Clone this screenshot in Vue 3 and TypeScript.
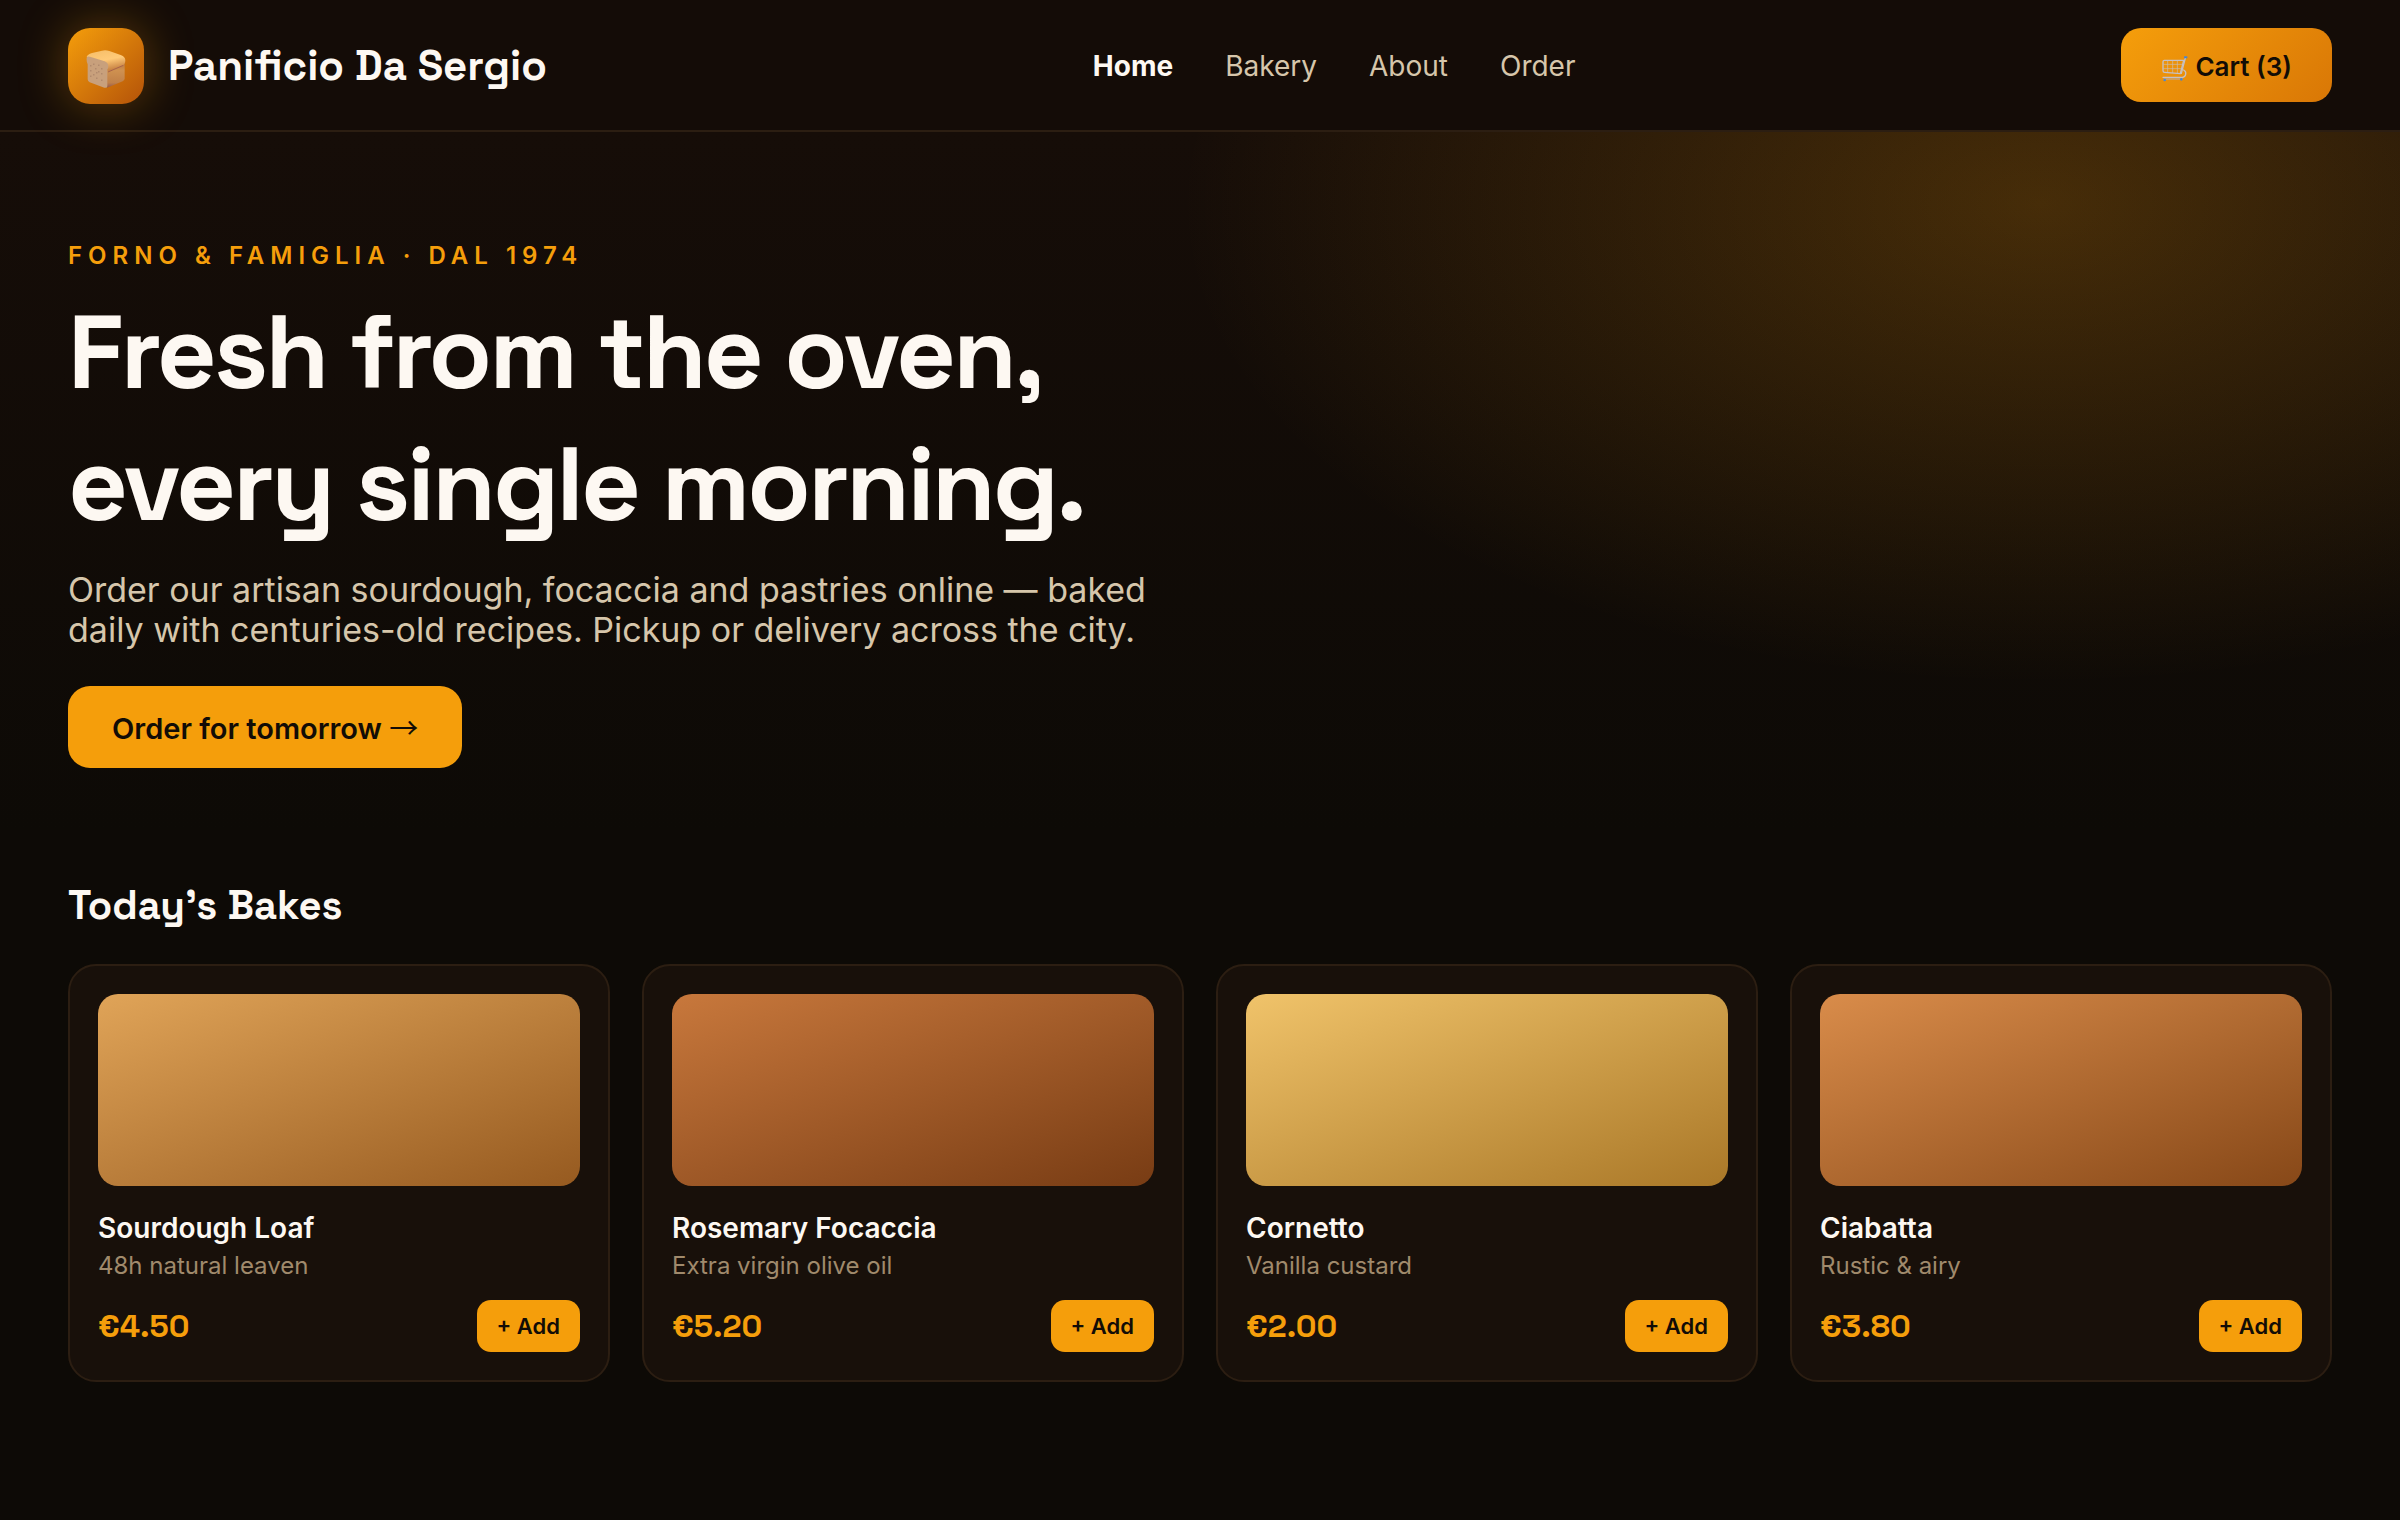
<script setup lang="ts">
interface Product {
  name: string
  note: string
  price: string
  from: string
  to: string
}

const links: string[] = ['Home', 'Bakery', 'About', 'Order']

const products: Product[] = [
  { name: 'Sourdough Loaf', note: '48h natural leaven', price: '€4.50', from: '#e0a458', to: '#965a20' },
  { name: 'Rosemary Focaccia', note: 'Extra virgin olive oil', price: '€5.20', from: '#c8783c', to: '#783c14' },
  { name: 'Cornetto', note: 'Vanilla custard', price: '€2.00', from: '#f0c36a', to: '#aa7828' },
  { name: 'Ciabatta', note: 'Rustic & airy', price: '€3.80', from: '#d98c4a', to: '#874818' },
]
</script>

<template>
  <div class="page">
    <header class="header">
      <div class="brand">
        <span class="logo">
          <svg width="40" height="43" viewBox="80 74 120 129" aria-hidden="true">
            <defs>
              <linearGradient id="crust" x1="0" y1="0" x2="0.35" y2="1">
                <stop offset="0" stop-color="#f5bd68" />
                <stop offset="0.55" stop-color="#ffca78" />
                <stop offset="1" stop-color="#c98445" />
              </linearGradient>
              <linearGradient id="side" x1="0" y1="0" x2="0" y2="1">
                <stop offset="0" stop-color="#b97842" />
                <stop offset="0.3" stop-color="#cf9150" />
                <stop offset="0.8" stop-color="#c08048" />
                <stop offset="1" stop-color="#94594e" />
              </linearGradient>
            </defs>
            <path d="M143 148 L196 128 V174 Q196 180 190 183 L143 202 Z" fill="url(#side)" />
            <path d="M82 110 Q84 102 98 98 L128 91 Q138 88 150 92 L182 103 Q198 108 198 120 Q198 132 190 136 L146 154 L138 130 Z" fill="url(#crust)" />
            <path d="M146 155 L192 135" stroke="#a9634a" stroke-width="3" fill="none" />
            <path d="M82 112 Q83 107 92 109 L136 123 Q147 128 147 138 Q147 144 144 148 L144 198 Q143 204 135 202 L91 186 Q85 183 85 177 V132 Q81 126 82 112 Z" fill="#c8a07c" />
            <g fill="#96705c">
              <rect x="93" y="135" width="3" height="3" />
              <rect x="102" y="130" width="3" height="3" />
              <rect x="117" y="133" width="3" height="3" />
              <rect x="108" y="144" width="3" height="3" />
              <rect x="126" y="144" width="3" height="3" />
              <rect x="93" y="150" width="3" height="3" />
              <rect x="117" y="153" width="3" height="3" />
              <rect x="102" y="162" width="3" height="3" />
              <rect x="111" y="156" width="3" height="3" />
              <rect x="126" y="159" width="3" height="3" />
              <rect x="93" y="166" width="3" height="3" />
              <rect x="111" y="172" width="3" height="3" />
              <rect x="126" y="178" width="3" height="3" />
            </g>
          </svg>
        </span>
        <span class="brand-name">Panificio Da Sergio</span>
      </div>
      <nav class="nav">
        <a v-for="(link, i) in links" :key="link" href="#" :class="{ active: i === 0 }">{{ link }}</a>
      </nav>
      <button class="cart" type="button">
        <svg width="28" height="31" viewBox="248 149 84 93" fill="none" aria-hidden="true">
          <g stroke="#c9bdb4" stroke-width="2">
            <path d="M255 189 H313 M255 202 H311 M268 178 V214 M283 178 V215 M297 178 V216" />
          </g>
          <g stroke="#c6c0c4" stroke-width="4" stroke-linejoin="round" stroke-linecap="round">
            <path d="M316 177 H258 Q254 177 254 181 V208 Q254 213 259 213 L306 217 Z" />
            <path d="M321 170 L309 216 M316 206 Q324 210 322 219 Q320 227 312 228 H254" />
          </g>
          <path d="M256 233 H314" stroke="#b5acad" stroke-width="3" />
          <g fill="#4a86d0">
            <rect x="317" y="165" width="10" height="6" rx="1" />
            <circle cx="259" cy="236" r="4" />
            <circle cx="309" cy="234" r="4" />
          </g>
        </svg>
        Cart (3)
      </button>
    </header>

    <main>
      <section class="hero">
        <p class="eyebrow">FORNO &amp; FAMIGLIA · DAL 1974</p>
        <h1>Fresh from the oven,<br />every single morning.</h1>
        <p class="lead">
          Order our artisan sourdough, focaccia and pastries online — baked<br />
          daily with centuries-old recipes. Pickup or delivery across the city.
        </p>
        <button class="cta" type="button">Order for tomorrow <span class="arrow">→</span></button>
      </section>

      <section class="bakes">
        <h2>Today’s Bakes</h2>
        <div class="grid">
          <article v-for="p in products" :key="p.name" class="card">
            <div class="photo" :style="{ '--from': p.from, '--to': p.to }"></div>
            <h3>{{ p.name }}</h3>
            <p class="note">{{ p.note }}</p>
            <div class="buy">
              <span class="price">{{ p.price }}</span>
              <button class="add" type="button">+ Add</button>
            </div>
          </article>
        </div>
      </section>
    </main>
  </div>
</template>

<style>
body {
  margin: 0;
  background: #0d0a06;
}
</style>

<style scoped>
.page {
  min-height: 100vh;
  font-family: Inter, sans-serif;
  color: #fdf8f2;
  background: linear-gradient(180deg, #160d08 0, #160d08 132px, #0d0a06 832px);
}

h1,
h2,
h3,
p {
  margin: 0;
}

button {
  border: 0;
  font-family: inherit;
  font-weight: 600;
  color: #120c06;
  background: #f59e0b;
  cursor: pointer;
}

.header {
  display: flex;
  align-items: center;
  justify-content: space-between;
  padding: 28px 68px 26px;
  background: #140c07;
  border-bottom: 2px solid #2c1e12;
}

.brand {
  display: flex;
  align-items: center;
  gap: 24px;
}

.logo {
  display: flex;
  align-items: center;
  justify-content: center;
  width: 76px;
  height: 76px;
  border-radius: 22px;
  background: linear-gradient(135deg, #f59e0b, #b45309);
  box-shadow: 0 0 48px rgba(245, 158, 11, 0.35);
}

.brand-name,
h1,
h2,
.price {
  font-family: "Space Grotesk", Inter, sans-serif;
}

.brand-name {
  font-size: 42px;
  line-height: 52px;
  font-weight: 600;
}

.nav {
  display: flex;
  gap: 52px;
  font-size: 28px;
}

.nav a {
  color: #d6c6ab;
  text-decoration: none;
}

.nav .active {
  color: #fdf8f2;
  font-weight: 700;
}

.cart {
  display: flex;
  align-items: center;
  align-self: flex-start;
  gap: 6px;
  height: 74px;
  padding: 2px 40px 0;
  border-radius: 20px;
  font-size: 26px;
  background: linear-gradient(135deg, #f59e0b, #d97706);
}

.hero {
  display: flex;
  flex-direction: column;
  align-items: flex-start;
  padding: 108px 68px 64px;
  background: radial-gradient(860px 480px at 85% 72px, rgba(245, 158, 11, 0.22), transparent);
}

.eyebrow {
  font-size: 24px;
  line-height: 32px;
  font-weight: 600;
  letter-spacing: 6px;
  color: #f59e0b;
}

h1 {
  margin-top: 14px;
  font-size: 104px;
  line-height: 132px;
  font-weight: 700;
  letter-spacing: -3px;
}

.lead {
  margin-top: 20px;
  font-size: 34px;
  line-height: 40px;
  color: #d6c6ab;
}

.cta {
  height: 82px;
  margin-top: 36px;
  padding: 0 44px;
  border-radius: 22px;
  font-size: 29px;
  line-height: 36px;
}

.arrow {
  font-family: "Noto Sans CJK JP", sans-serif;
  font-weight: 400;
}

.bakes {
  padding: 48px 68px 64px;
}

h2 {
  font-size: 40px;
  line-height: 52px;
  font-weight: 600;
}

.grid {
  display: grid;
  grid-template-columns: repeat(4, 1fr);
  gap: 32px;
  margin-top: 32px;
}

.card {
  padding: 28px;
  border: 2px solid #2c1e12;
  border-radius: 28px;
  background: #18100a;
}

.photo {
  height: 192px;
  border-radius: 20px;
  background: linear-gradient(160deg, var(--from), var(--to));
}

h3 {
  margin-top: 24px;
  font-size: 28px;
  line-height: 36px;
  font-weight: 600;
}

.note {
  margin-top: 4px;
  font-size: 24px;
  line-height: 32px;
  color: #a08a6c;
}

.buy {
  display: flex;
  align-items: center;
  justify-content: space-between;
  margin-top: 18px;
}

.price {
  font-size: 32px;
  font-weight: 700;
  color: #f59e0b;
}

.add {
  height: 52px;
  padding: 0 20px;
  border-radius: 14px;
  font-size: 22px;
}
</style>
